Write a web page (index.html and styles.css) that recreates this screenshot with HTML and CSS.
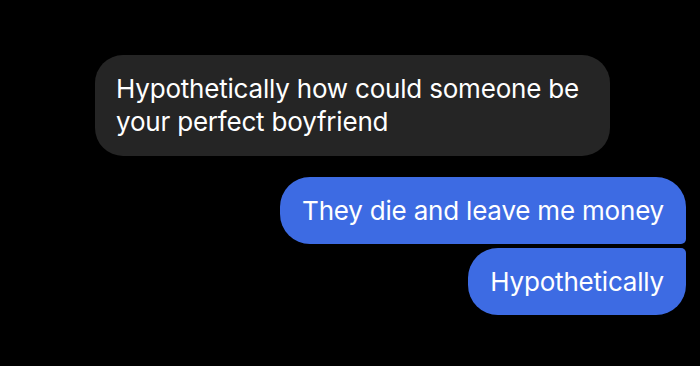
FILE: index.html
```html
<!DOCTYPE html>
<html lang="en">
<head>
  <meta charset="UTF-8">
  <title>Messages</title>
  <link rel="stylesheet" href="styles.css">
</head>
<body>
  <div class="thread">
    <div class="bubble received">Hypothetically how could someone be your perfect boyfriend</div>

    <div class="group sent-group">
      <div class="bubble sent first">They die and leave me money</div>
      <div class="bubble sent last">Hypothetically</div>
    </div>
  </div>
</body>
</html>
```

FILE: styles.css
```css
body {
  margin: 0;
  background: #000;
  font-family: 'Inter', 'Noto Sans', Arial, sans-serif;
  color: #fff;
  width: 700px;
  height: 366px;
  overflow: hidden;
}

.thread {
  display: flex;
  flex-direction: column;
  padding: 55px 14px 0 95px;
}

.bubble {
  font-size: 26px;
  line-height: 33px;
  letter-spacing: -0.2px;
  box-sizing: border-box;
}

.received {
  align-self: flex-start;
  width: 515px;
  padding: 17px 20px 18px 21px;
  background: #252525;
  border-radius: 28px;
}

.sent-group {
  display: flex;
  flex-direction: column;
  align-items: flex-end;
  gap: 4px;
  margin-top: 21px;
}

.sent {
  background: #3d6be3;
  padding: 17px 22px 17px 22px;
  height: 67px;
  white-space: nowrap;
}

.sent.first {
  border-radius: 30px 30px 5px 30px;
}

.sent.last {
  border-radius: 30px 5px 30px 30px;
}
```
